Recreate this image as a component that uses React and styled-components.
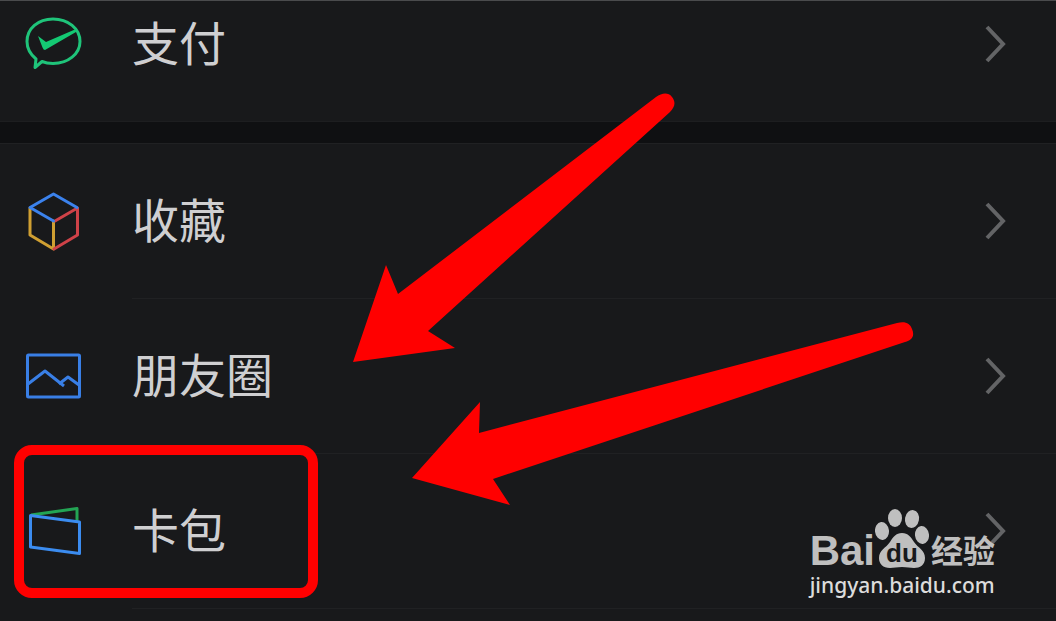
import React from "react";
import styled, { createGlobalStyle } from "styled-components";

const GlobalStyle = createGlobalStyle`
  body {
    margin: 0;
    padding: 0;
    background-color: #18191b;
    font-family: "Noto Sans CJK SC", "Noto Sans", sans-serif;
  }
`;

const PageContainer = styled.main`
  position: relative;
  box-sizing: border-box;
  min-height: 100vh;
  overflow: hidden;
  border-top: 1px solid #4a4b4d;
  background-color: #18191b;
`;

const MenuGroup = styled.nav`
  display: flex;
  flex-direction: column;
`;

const GroupGap = styled.div`
  height: 21px;
  background-color: #0f1012;
  border-top: 1px solid #1d1e20;
  border-bottom: 1px solid #202123;
`;

const MenuRow = styled.a`
  position: relative;
  display: flex;
  align-items: stretch;
  height: ${(props) => (props.$first ? "86px" : "155px")};
  padding-bottom: ${(props) => (props.$first ? "34px" : "0")};
  color: #cfcfd1;
  text-decoration: none;
`;

const IconBox = styled.span`
  display: flex;
  align-items: center;
  width: 108px;
  padding-left: 24px;
  padding-bottom: 2px;
`;

const RowBody = styled.span`
  display: flex;
  flex: 1;
  align-items: center;
  justify-content: space-between;
  padding-right: 48px;
  border-bottom: ${(props) => (props.$line ? "1px solid #202123" : "none")};
`;

const RowLabel = styled.span`
  padding-bottom: 6px;
  font-size: 47px;
  font-weight: 400;
  line-height: 64px;
`;

const Highlight = styled.div`
  position: absolute;
  top: -9px;
  left: 14px;
  box-sizing: border-box;
  width: 304px;
  height: 153px;
  border: 10px solid #ff0000;
  border-radius: 18px;
  pointer-events: none;
`;

const Arrow = styled.svg`
  position: absolute;
  top: ${(props) => props.$top}px;
  left: ${(props) => props.$left}px;
  fill: #ff0000;
  pointer-events: none;
`;

const Watermark = styled.div`
  position: absolute;
  right: 57px;
  bottom: 22px;
  display: flex;
  flex-direction: column;
  color: #bfbfbf;
  pointer-events: none;
`;

const Brand = styled.div`
  display: flex;
  align-items: flex-end;
  height: 62px;
  padding-bottom: 2px;
`;

const BrandLatin = styled.span`
  font-family: "Liberation Sans", sans-serif;
  font-size: 42px;
  font-weight: 700;
  line-height: 36px;
`;

const BrandChinese = styled.span`
  margin-left: 2px;
  padding-right: 4px;
  font-size: 32px;
  font-weight: 700;
  line-height: 40px;
`;

const PawText = styled.text`
  font-family: "Liberation Sans", sans-serif;
  font-size: 26px;
  font-weight: 700;
`;

const SiteAddress = styled.span`
  color: #dcdcdc;
  font-family: "Noto Sans", sans-serif;
  font-size: 21px;
  font-weight: 500;
  line-height: 28px;
`;

const PayIcon = () => (
  <svg width="60" height="60" viewBox="0 0 60 60" fill="none">
    <path
      d="M12 46 C6 41 3 35 3 28.500 C3 15.500 14 6 29 6 C44 6 56 15.500 56 28.500 C56 41 44 50.500 29 50.500 C25 50.500 21.500 50 18 48.500 L11 54.500 Z"
      stroke="#1fc47a"
      strokeWidth="3"
      strokeLinejoin="round"
    />
    <path d="M14 23 L22 29 L52 16 L52 19 L21 37 Q19.500 37 18.500 34.500 Z" fill="#14c973" />
  </svg>
);

const FavoritesIcon = () => (
  <svg width="60" height="60" viewBox="0 0 60 60" fill="none" strokeWidth="3" strokeLinejoin="round" strokeLinecap="round">
    <path d="M6 17 V44 L29.500 58 V30" stroke="#cf9f32" />
    <path d="M30 58 L53.500 44 V17 L31 30" stroke="#cf4248" />
    <path d="M6 16.500 L29.500 3 L53 16.500 M6 16.500 L29.500 30" stroke="#3b82ed" />
  </svg>
);

const MomentsIcon = () => (
  <svg width="60" height="60" viewBox="0 0 60 60" fill="none" stroke="#397fe6" strokeWidth="3" strokeLinejoin="round">
    <rect x="3.500" y="9" width="52" height="42" rx="1" />
    <path d="M4 38 L21 25 L40 40" />
    <path d="M35 38 L44 31 L55 39" />
  </svg>
);

const CardsIcon = () => (
  <svg width="60" height="60" viewBox="0 0 60 60" fill="none" strokeWidth="3" strokeLinejoin="round">
    <path d="M7 14 L53 7.500 V20" stroke="#23a454" />
    <path d="M6.500 14.500 L55.500 21 V52.500 L6.500 46 Z" stroke="#3b8cf0" />
  </svg>
);

const Chevron = () => (
  <svg width="24" height="40" viewBox="0 0 24 40" fill="none">
    <path d="M3 3 L19 20 L3 37" stroke="#636466" strokeWidth="4" />
  </svg>
);

const BaiduPaw = () => (
  <svg width="54" height="62" viewBox="0 0 54 62" fill="#bfbfbf">
    <ellipse cx="7" cy="24" rx="7" ry="9" transform="rotate(-6 7 24)" />
    <ellipse cx="20" cy="11" rx="7" ry="9" />
    <ellipse cx="37" cy="12" rx="7" ry="9" transform="rotate(10 37 12)" />
    <ellipse cx="47" cy="28" rx="7" ry="9" transform="rotate(-6 47 28)" />
    <path d="M27 26 C33 26 36 30 39 35 C43 41 50 43 50 51 C50 58 45 61 39 61 C35 61 32 60 27 60 C22 60 19 61 15 61 C8 61 4 57 4 51 C4 43 11 41 15 35 C18 30 21 26 27 26 Z" />
    <PawText x="11" y="55" fill="#18191b">du</PawText>
  </svg>
);

const menuItems = [
  { id: "favorites", label: "收藏", Icon: FavoritesIcon },
  { id: "moments", label: "朋友圈", Icon: MomentsIcon },
  { id: "cards", label: "卡包", Icon: CardsIcon, highlighted: true },
];

const App = () => {
  return (
    <>
      <GlobalStyle />
      <PageContainer>
        <MenuGroup>
          <MenuRow href="#pay" $first>
            <IconBox>
              <PayIcon />
            </IconBox>
            <RowBody>
              <RowLabel>支付</RowLabel>
              <Chevron />
            </RowBody>
          </MenuRow>
        </MenuGroup>
        <GroupGap />
        <MenuGroup>
          {menuItems.map(({ id, label, Icon, highlighted }) => (
            <MenuRow key={id} href={`#${id}`}>
              <IconBox>
                <Icon />
              </IconBox>
              <RowBody $line>
                <RowLabel>{label}</RowLabel>
                <Chevron />
              </RowBody>
              {highlighted && <Highlight />}
            </MenuRow>
          ))}
        </MenuGroup>

        <Arrow $top={92} $left={353} width="324" height="272" viewBox="0 0 324 272">
          <path d="M0 269 L33 172 L45 201 L303 4 C309 0 315 -1 319 4 C323 9 322 14 317 19 L75 238 L102 255 Z" />
        </Arrow>
        <Arrow $top={321} $left={412} width="504" height="184" viewBox="0 0 504 184">
          <path d="M0 156 L68 80 L67 111 L485 1 C493 -1 498 1 500 7 C503 14 500 18 493 20 L81 157 L98 183 Z" />
        </Arrow>

        <Watermark>
          <Brand>
            <BrandLatin>Bai</BrandLatin>
            <BaiduPaw />
            <BrandChinese>经验</BrandChinese>
          </Brand>
          <SiteAddress>jingyan.baidu.com</SiteAddress>
        </Watermark>
      </PageContainer>
    </>
  );
};

export default App;
